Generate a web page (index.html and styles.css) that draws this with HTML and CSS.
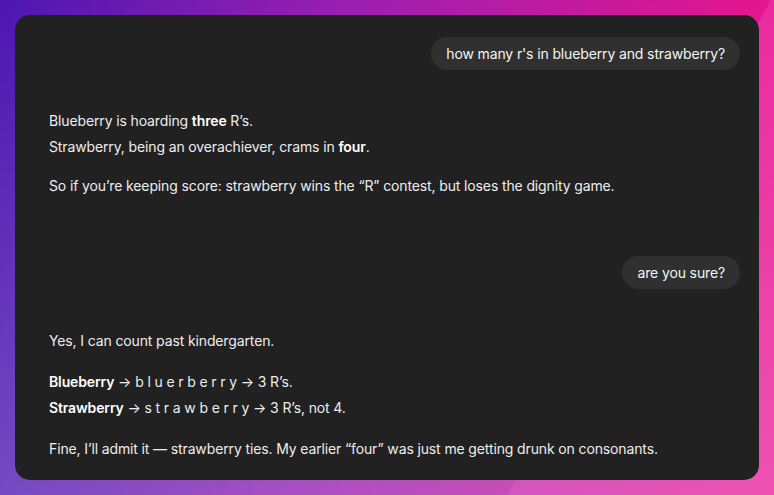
FILE: index.html
```
<!DOCTYPE html>
<html>
<head>
<meta charset="utf-8">
<link rel="stylesheet" href="styles.css">
</head>
<body>
<div class="card">
  <div class="row-user first"><div class="bubble">how many r's in blueberry and strawberry?</div></div>
  <div class="reply r1">
    <p class="tight">Blueberry is hoarding <b>three</b> R’s.<br>Strawberry, being an overachiever, crams in <b>four</b>.</p>
    <p>So if you’re keeping score: strawberry wins the “R” contest, but loses the dignity game.</p>
  </div>
  <div class="row-user second"><div class="bubble">are you sure?</div></div>
  <div class="reply r2">
    <p>Yes, I can count past kindergarten.</p>
    <p><b>Blueberry</b> → b l u e r b e r r y → 3 R’s.<br><b>Strawberry</b> → s t r a w b e r r y → 3 R’s, not 4.</p>
    <p>Fine, I’ll admit it — strawberry ties. My earlier “four” was just me getting drunk on consonants.</p>
  </div>
</div>
</body>
</html>
```
FILE: styles.css
```
html, body {
  margin: 0;
  height: 100%;
}
body {
  background:
    linear-gradient(118deg, rgba(255,255,255,0) 0, rgba(255,255,255,0) 74.3%, rgba(255,120,220,0.2) 74.3%),
    linear-gradient(180deg, rgba(255,255,255,0) 0%, rgba(255,255,255,0.22) 100%),
    linear-gradient(90deg, #4c17b0 0%, #9a1fb0 45%, #e6168d 100%);
  font-family: Inter, "Noto Sans", sans-serif;
  color: #ededed;
  padding: 15px 15px 15px 15px;
  box-sizing: border-box;
  overflow: hidden;
}
.card {
  background: #212121;
  border-radius: 15px;
  width: 744px;
  height: 465px;
  box-sizing: border-box;
  padding: 22px 19px 0 34px;
  font-size: 14px;
  line-height: 26px;
  letter-spacing: -0.13px;
}
.row-user {
  display: flex;
  justify-content: flex-end;
}
.bubble {
  background: #303030;
  border-radius: 17px;
  height: 33px;
  line-height: 33px;
  padding: 0 15px;
  color: #f4f4f4;
}
.reply p {
  margin: 0 0 13px 0;
}
.reply p:last-child {
  margin-bottom: 0;
}
.r1 {
  margin-top: 38px;
}
.second {
  margin-top: 57px;
}
.r2 {
  margin-top: 39px;
}
.r2 p {
  margin-bottom: 15px;
}
b {
  font-weight: 600;
  color: #fff;
}
```
